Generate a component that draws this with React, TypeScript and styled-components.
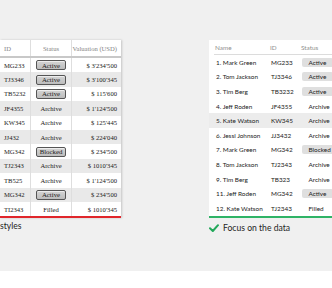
import React from "react";
import styled, { createGlobalStyle } from "styled-components";

const GlobalStyle = createGlobalStyle`
  html, body {
    margin: 0;
    padding: 0;
    background: #ffffff;
    overflow: hidden;
  }
`;

const Page = styled.div`
  width: 332px;
  height: 271px;
  box-sizing: border-box;
  padding-top: 40px;
  background: #f0f0f0;
  display: flex;
  gap: 88px;
  overflow: hidden;
`;

const Panel = styled.div<{ $width: number }>`
  flex: 0 0 ${(p) => p.$width}px;
  display: flex;
  flex-direction: column;
`;

/* ---------- the "too many styles" table ---------- */

const OldTable = styled.div`
  background: #ffffff;
  font-family: "Liberation Serif", serif;
  font-size: 6.6px;
  color: #222;
  box-shadow: 1px 0 2px rgba(0, 0, 0, 0.18);
  border-bottom: 2px solid #e0262b;
`;

const OldRow = styled.div<{ $shade?: boolean; $head?: boolean }>`
  display: grid;
  grid-template-columns: 31px 41px 48px;
  height: ${(p) => (p.$head ? "16px" : "14.4px")};
  background: ${(p) => (p.$shade ? "#e9e9e9" : "#ffffff")};
  color: ${(p) => (p.$head ? "#858585" : "#222")};
  border-bottom: ${(p) => (p.$head ? "2px solid #c8c8c8" : "none")};
`;

const OldCell = styled.div<{ $align: "left" | "center" | "right" }>`
  display: flex;
  align-items: center;
  justify-content: ${(p) =>
    p.$align === "left" ? "flex-start" : p.$align === "right" ? "flex-end" : "center"};
  padding: 0 4px;
  border-right: 1px solid #dedede;
  white-space: nowrap;
  &:last-child {
    border-right: none;
    padding: 0 3px 0 0;
  }
`;

const OldBadge = styled.span`
  display: inline-flex;
  align-items: center;
  justify-content: center;
  width: 28px;
  height: 8px;
  border: 1px solid #555;
  border-radius: 2px;
  background: linear-gradient(#d4d4d4, #bdbdbd);
  box-shadow: inset 0 1px 0 rgba(255, 255, 255, 0.6);
  color: #1a1a1a;
  font-size: 6.8px;
`;

/* ---------- the "focus on the data" table ---------- */

const CleanTable = styled.div`
  background: #ffffff;
  font-family: Lato, "Noto Sans", sans-serif;
  font-size: 6.4px;
  color: #222;
  border-bottom: 2px solid #2fb366;
`;

const CleanHead = styled.div`
  display: grid;
  grid-template-columns: 56px 31px 1fr;
  height: 13px;
  margin-left: 5px;
  padding-top: 1px;
  color: #8f8f8f;
  border-bottom: 1px solid #dcdcdc;
  align-items: center;
`;

const CleanRow = styled.div<{ $hover?: boolean }>`
  display: grid;
  grid-template-columns: 61px 31px 1fr;
  height: 14.6px;
  align-items: center;
  background: ${(p) => (p.$hover ? "#ececec" : "transparent")};
`;

const CleanCell = styled.div<{ $pad: number }>`
  padding-left: ${(p) => p.$pad}px;
  white-space: nowrap;
`;

const CleanBadge = styled.span<{ $filled: boolean }>`
  display: inline-block;
  padding: 1px 6.5px;
  border-radius: 2px;
  background: ${(p) => (p.$filled ? "#dfdfdf" : "transparent")};
`;

/* ---------- captions ---------- */

const Caption = styled.div<{ $top: number }>`
  margin-top: ${(p) => p.$top}px;
  display: flex;
  align-items: center;
  gap: 4px;
  font-family: Lato, "Noto Sans", sans-serif;
  font-size: 8.6px;
  line-height: 12px;
  color: #1e1e1e;
`;

const Check = () => (
  <svg width="10" height="8" viewBox="0 0 10 8">
    <path d="M1 4.3 L3.8 7 L9 1.2" fill="none" stroke="#22a85a" strokeWidth="2" strokeLinecap="round" strokeLinejoin="round" />
  </svg>
);

type Status = "Active" | "Archive" | "Blocked" | "Filled";

const oldRows: [string, Status, string][] = [
  ["MG233", "Active", "$ 3'234'500"],
  ["TJ3346", "Active", "$ 3'100'345"],
  ["TB5232", "Active", "$ 115'600"],
  ["JF4355", "Archive", "$ 1'124'500"],
  ["KW345", "Archive", "$ 125'445"],
  ["JJ432", "Archive", "$ 224'040"],
  ["MG342", "Blocked", "$ 234'500"],
  ["TJ2343", "Archive", "$ 1010'345"],
  ["TB525", "Archive", "$ 1'124'500"],
  ["MG342", "Active", "$ 234'500"],
  ["TI2343", "Filled", "$ 1010'345"],
];

const cleanRows: [string, string, Status][] = [
  ["1. Mark Green", "MG233", "Active"],
  ["2. Tom Jackson", "TJ3346", "Active"],
  ["3. Tim Berg", "TB3232", "Active"],
  ["4. Jeff Roden", "JF4355", "Archive"],
  ["5. Kate Watson", "KW345", "Archive"],
  ["6. Jessi Johnson", "JJ3432", "Archive"],
  ["7. Mark Green", "MG342", "Blocked"],
  ["8. Tom Jackson", "TJ2343", "Archive"],
  ["9. Tim Berg", "TB323", "Archive"],
  ["11. Jeff Roden", "MG342", "Active"],
  ["12. Kate Watson", "TJ2343", "Filled"],
];

const boxed = (s: Status) => s === "Active" || s === "Blocked";

const App = (): React.ReactElement => (
  <>
    <GlobalStyle />
    <Page>
      <Panel $width={121}>
        <OldTable>
          <OldRow $head>
            <OldCell $align="left">ID</OldCell>
            <OldCell $align="center">Status</OldCell>
            <OldCell $align="right">Valuation (USD)</OldCell>
          </OldRow>
          {oldRows.map(([id, status, value], i) => (
            <OldRow key={i} $shade={i % 2 === 1}>
              <OldCell $align="left">{id}</OldCell>
              <OldCell $align="center">
                {boxed(status) ? <OldBadge>{status}</OldBadge> : status}
              </OldCell>
              <OldCell $align="right">{value}</OldCell>
            </OldRow>
          ))}
        </OldTable>
        <Caption $top={2}>styles</Caption>
      </Panel>

      <Panel $width={140}>
        <CleanTable>
          <CleanHead>
            <CleanCell $pad={1}>Name</CleanCell>
            <CleanCell $pad={0}>ID</CleanCell>
            <CleanCell $pad={0}>Status</CleanCell>
          </CleanHead>
          {cleanRows.map(([name, id, status], i) => (
            <CleanRow key={i} $hover={i === 4}>
              <CleanCell $pad={7}>{name}</CleanCell>
              <CleanCell $pad={1}>{id}</CleanCell>
              <CleanCell $pad={1}>
                <CleanBadge $filled={boxed(status)}>{status}</CleanBadge>
              </CleanCell>
            </CleanRow>
          ))}
        </CleanTable>
        <Caption $top={4}>
          <Check />
          Focus on the data
        </Caption>
      </Panel>
    </Page>
  </>
);

export default App;
